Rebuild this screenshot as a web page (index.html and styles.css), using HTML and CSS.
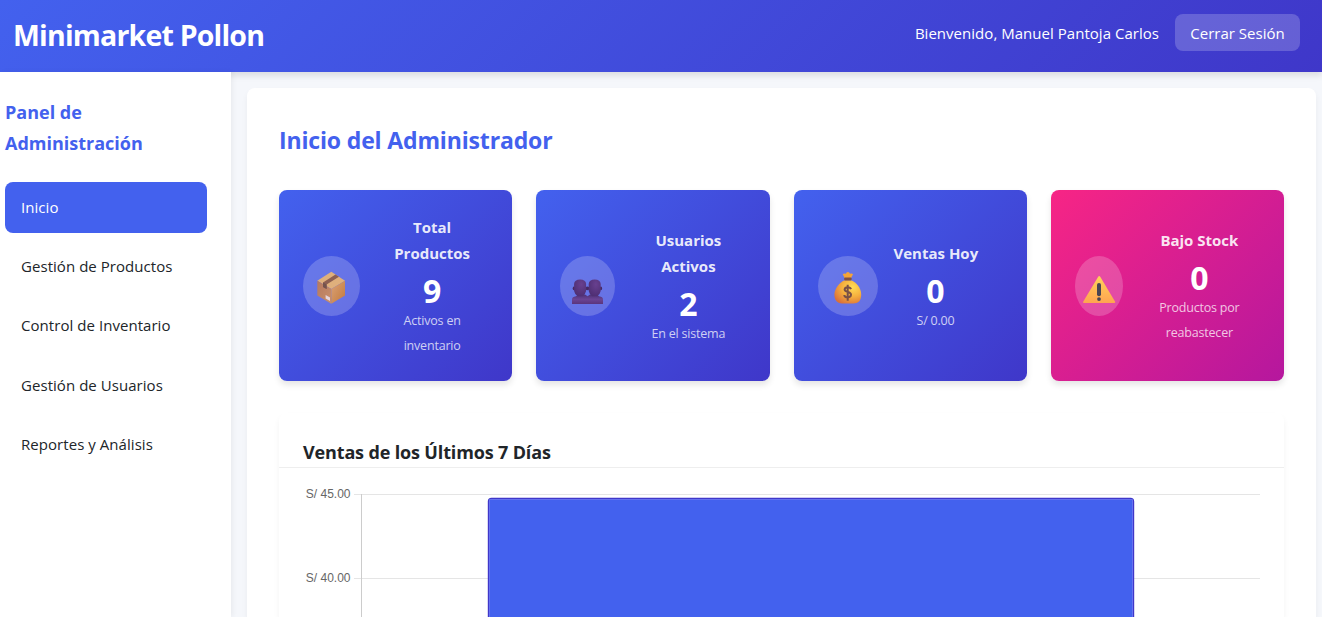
FILE: index.html
```html
<!DOCTYPE html>
<html lang="es">
<head>
<meta charset="utf-8">
<title>Minimarket Pollon</title>
<link rel="stylesheet" href="styles.css">
</head>
<body>
<header class="header">
  <h1 class="brand">Minimarket Pollon</h1>
  <div class="user">
    <span class="welcome">Bienvenido, Manuel Pantoja Carlos</span>
    <button class="logout">Cerrar Sesión</button>
  </div>
</header>
<div class="layout">
  <aside class="sidebar">
    <h2 class="side-title">Panel de<br>Administración</h2>
    <nav class="menu">
      <a class="item active">Inicio</a>
      <a class="item">Gestión de Productos</a>
      <a class="item">Control de Inventario</a>
      <a class="item">Gestión de Usuarios</a>
      <a class="item">Reportes y Análisis</a>
    </nav>
  </aside>
  <main class="main">
    <h2 class="page-title">Inicio del Administrador</h2>
    <section class="cards">
      <article class="card">
        <div class="icon icon-box">
          <svg width="57" height="60" viewBox="0 0 57 60">
            <defs>
              <linearGradient id="boxL" x1="0" y1="0" x2="1" y2="1"><stop offset="0" stop-color="#b5795f"/><stop offset="1" stop-color="#c98f6c"/></linearGradient>
              <linearGradient id="boxR" x1="0" y1="0" x2="1" y2="1"><stop offset="0" stop-color="#dba277"/><stop offset="1" stop-color="#c27a3c"/></linearGradient>
            </defs>
            <path d="M28.3 15.7 42 24.7 28.3 33 14.3 24.7Z" fill="#dfb07c"/>
            <path d="M14.3 24.7 28.3 33V47.7L14.3 39.5Z" fill="url(#boxL)"/>
            <path d="M42 24.7 28.3 33V47.7L42 39.5Z" fill="url(#boxR)"/>
            <path d="M32.5 18.4 36 20.8 23.6 28.6V33L20 31V26.6Z" fill="#8d6052"/>
            <path d="M20 26.6 23.6 28.6V33L20 31Z" fill="#74534e"/>
            <path d="M22.6 39 27 41.4V45L22.6 42.5Z" fill="#e6d5dd"/>
          </svg>
        </div>
        <div class="info"><h3>Total<br>Productos</h3><p class="value">9</p><small>Activos en<br>inventario</small></div>
      </article>
      <article class="card">
        <div class="icon icon-users">
          <svg width="55" height="60" viewBox="0 0 55 60">
            <defs><radialGradient id="head" cx=".6" cy=".3" r=".8"><stop offset="0" stop-color="#68408f"/><stop offset="1" stop-color="#4c2d70"/></radialGradient>
            <linearGradient id="bust" x1="0" y1="0" x2="0" y2="1"><stop offset="0" stop-color="#4d3175"/><stop offset=".5" stop-color="#6b4494"/><stop offset="1" stop-color="#5a357c"/></linearGradient></defs>
            <path d="M12 48V43.5Q12 40.8 16 40.2L18 38.6H25L27.6 40.2 30 38.6H37L39 40.2Q43 40.8 43 43.5V48Z" fill="url(#bust)"/>
            <g fill="#452963"><ellipse cx="13.9" cy="32.4" rx="1.2" ry="1.8"/><ellipse cx="27.4" cy="32.4" rx="2" ry="1.8"/><ellipse cx="40.9" cy="32.4" rx="1.2" ry="1.8"/></g>
            <path d="M14.1 28Q14.4 23.4 20.1 23.4T26.1 28V35Q25.8 37.6 22.5 40.2H17.7Q14.4 37.6 14.1 35Z" fill="url(#head)"/>
            <path d="M28.7 28Q29 23.4 34.7 23.4T40.7 28V35Q40.4 37.6 37.1 40.2H32.3Q29 37.6 28.7 35Z" fill="url(#head)"/>
          </svg>
        </div>
        <div class="info"><h3>Usuarios<br>Activos</h3><p class="value">2</p><small>En el sistema</small></div>
      </article>
      <article class="card">
        <div class="icon icon-money">
          <svg width="60" height="60" viewBox="0 0 60 60">
            <defs><radialGradient id="bag" cx=".68" cy=".3" r=".8"><stop offset="0" stop-color="#ffdc55"/><stop offset=".5" stop-color="#f5b03e"/><stop offset="1" stop-color="#da7139"/></radialGradient></defs>
            <path d="M26.6 22 24.7 18.2Q26 16.9 27.8 17.8 28.4 16 29.9 16T32 17.8Q33.8 16.8 35 18.2L33 22Z" fill="#f5a437"/>
            <path d="M27 24.3H32.8C38 26 43.2 32 43.2 38.5S40 47.4 35.5 47.4H24C19 47.4 16.4 44 16.4 38.5S21.5 26 27 24.3Z" fill="url(#bag)"/>
            <rect x="26.2" y="21.4" width="7.4" height="3.2" rx="1" fill="#805044"/>
            <path d="M33 33.2Q32.3 31.2 29.6 31.2T26.6 33.6C26.6 36.8 33 35.2 33 38.6Q33 41.4 29.7 41.4T26.3 39M29.7 28.8V44.8" fill="none" stroke="#795046" stroke-width="2"/>
          </svg>
        </div>
        <div class="info narrow"><h3>Ventas Hoy</h3><p class="value">0</p><small>S/ 0.00</small></div>
      </article>
      <article class="card danger">
        <div class="icon icon-warn">
          <svg width="48" height="60" viewBox="0 0 48 60">
            <defs><linearGradient id="warn" x1="0" y1="0" x2="0" y2="1"><stop offset="0" stop-color="#ffd35a"/><stop offset="1" stop-color="#ffa451"/></linearGradient></defs>
            <path d="M23.2 20.7Q24.2 19.3 25.2 20.7L40 45.5Q40.8 47 39.2 47H9Q7.5 47 8.3 45.5Z" fill="url(#warn)"/>
            <rect x="22" y="27" width="4" height="13.2" rx="2" fill="#494553"/>
            <circle cx="24" cy="43.1" r="1.9" fill="#494553"/>
          </svg>
        </div>
        <div class="info"><h3>Bajo Stock</h3><p class="value">0</p><small>Productos por<br>reabastecer</small></div>
      </article>
    </section>
    <section class="chart">
      <h3 class="chart-title">Ventas de los Últimos 7 Días</h3>
      <svg class="plot" width="1005" height="149" viewBox="0 0 1005 149">
        <path d="M75 26.5H981M75 110.5H981" stroke="#e5e5e5"/>
        <path d="M82.5 26V149" stroke="#ccc"/>
        <g class="ticks" text-anchor="end"><text x="71.5" y="30">S/ 45.00</text><text x="71.5" y="114">S/ 40.00</text></g>
        <path d="M209.5 160V33.5Q209.5 30.5 212.5 30.5H851.5Q854.5 30.5 854.5 33.5V160Z" fill="#4361ee" stroke="#3f37c9" stroke-width="1.4"/>
        <path d="M210.5 160V31.5H853.5V160" fill="none" stroke="#6f78f2" stroke-width=".8"/>
      </svg>
    </section>
  </main>
</div>
</body>
</html>
```
FILE: styles.css
```css
* { box-sizing: border-box; margin: 0; padding: 0; }
body {
  width: 1322px; height: 617px; overflow: hidden;
  display: flex; flex-direction: column;
  background: #f5f7fb; color: #212529;
  font: 15px/1.6 "Open Sans", "Noto Sans", sans-serif;
}
.header {
  flex: none; height: 72px; padding: 0 22px 4px 13px;
  display: flex; align-items: center; justify-content: space-between;
  background: linear-gradient(135deg, #4361ee, #3f37c9);
  box-shadow: 0 4px 6px rgba(0, 0, 0, .1);
  color: #fff;
}
.brand { padding-top: 1px; font-size: 28.5px; font-weight: 700; line-height: 44px; letter-spacing: -.8px; }
.user { display: flex; align-items: center; gap: 16px; white-space: nowrap; }
.welcome { margin-top: -2px; letter-spacing: .03px; }
.logout {
  width: 125px; height: 37px; margin-top: -3px; border: 0; border-radius: 8px;
  background: rgba(255, 255, 255, .2); color: #fff;
  font: inherit;
}
.layout { flex: none; height: 545px; display: flex; gap: 16px; }
.sidebar {
  position: relative; flex: none; width: 231px; padding: 25px 24px 0 5px;
  background: #fff; box-shadow: 2px 0 5px rgba(0, 0, 0, .05);
}
.side-title { height: 85px; font-size: 18px; line-height: 31px; color: #4361ee; white-space: nowrap; }
.menu { display: flex; flex-direction: column; gap: 8px; }
.item { height: 51.2px; padding-left: 16px; border-radius: 8px; line-height: 51px; letter-spacing: .05px; white-space: nowrap; }
.item.active { background: #4361ee; color: #fff; }
.main {
  flex: none; width: 1069px; height: 529px; margin-top: 16px; padding: 32px 32px 0;
  background: #fff; border-radius: 8px 8px 0 0; box-shadow: 0 4px 6px rgba(0, 0, 0, .05);
}
.page-title { height: 70px; font-size: 23px; line-height: 41px; letter-spacing: -.15px; color: #4361ee; white-space: nowrap; }
.cards { display: grid; grid-template-columns: repeat(4, 1fr); gap: 24px; }
.card {
  height: 191px; padding: 24px; display: flex; align-items: center; gap: 16px;
  background: linear-gradient(135deg, #4361ee, #3f37c9); color: #fff;
  border-radius: 8px; box-shadow: 0 4px 6px rgba(0, 0, 0, .1);
}
.danger { background: linear-gradient(135deg, #f72585, #b5179e); }
.icon { flex: none; height: 60px; border-radius: 50%; background: rgba(255, 255, 255, .2); }
.icon svg { display: block; }
.icon-box { width: 57px; }
.icon-users { width: 55px; }
.icon-money { width: 60px; }
.icon-warn { width: 48px; }
.info { flex: 1; padding-top: 2px; text-align: center; white-space: nowrap; }
.info.narrow { flex: none; width: 84px; padding-top: 3px; }
.info h3 { font-size: 15px; line-height: 26px; color: rgba(255, 255, 255, .9); }
.value { margin-top: 7px; font-size: 32px; line-height: 36px; font-weight: 700; }
.info small { display: block; font-size: 12.5px; line-height: 24.6px; letter-spacing: -.2px; color: rgba(255, 255, 255, .75); }
.chart { margin-top: 32px; border-radius: 8px 8px 0 0; box-shadow: 0 4px 6px rgba(0, 0, 0, .05); }
.chart-title { height: 55px; padding: 24px 24px 0; font-size: 18px; line-height: 31px; letter-spacing: -.15px; border-bottom: 1px solid #eee; white-space: nowrap; }
.plot { display: block; }
.ticks { font: 12px "Liberation Sans", Arial, sans-serif; fill: #666; }
```
